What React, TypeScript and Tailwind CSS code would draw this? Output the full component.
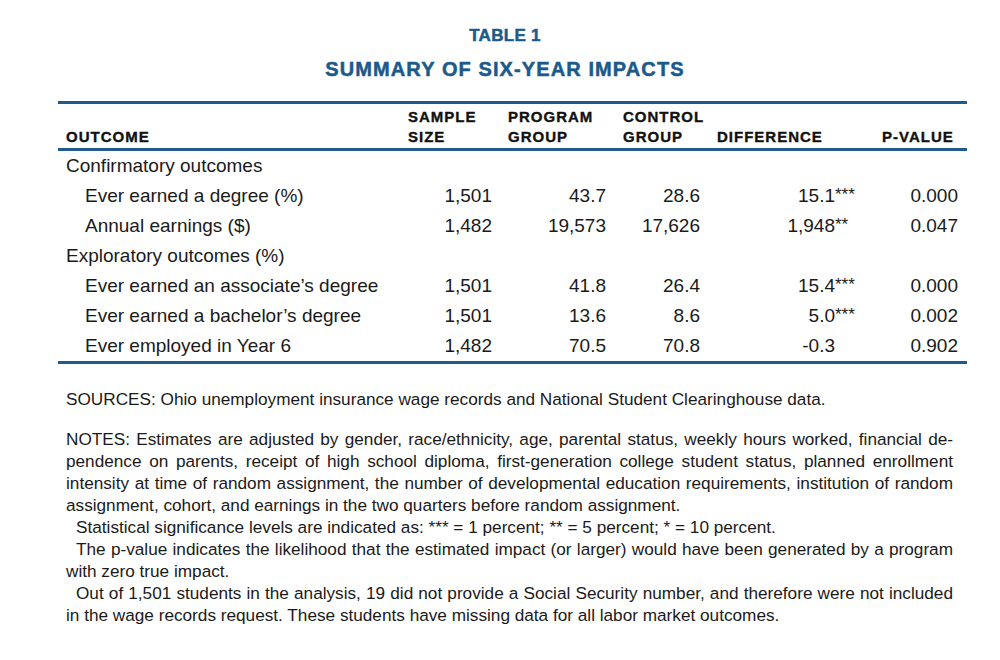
import type { ReactNode } from "react";

type Row = {
  label: string;
  group?: boolean;
  sample?: string;
  program?: string;
  control?: string;
  diff?: string;
  stars?: string;
  p?: string;
};

const ROWS: Row[] = [
  { label: "Confirmatory outcomes", group: true },
  { label: "Ever earned a degree (%)", sample: "1,501", program: "43.7", control: "28.6", diff: "15.1", stars: "***", p: "0.000" },
  { label: "Annual earnings ($)", sample: "1,482", program: "19,573", control: "17,626", diff: "1,948", stars: "**", p: "0.047" },
  { label: "Exploratory outcomes (%)", group: true },
  { label: "Ever earned an associate’s degree", sample: "1,501", program: "41.8", control: "26.4", diff: "15.4", stars: "***", p: "0.000" },
  { label: "Ever earned a bachelor’s degree", sample: "1,501", program: "13.6", control: "8.6", diff: "5.0", stars: "***", p: "0.002" },
  { label: "Ever employed in Year 6", sample: "1,482", program: "70.5", control: "70.8", diff: "-0.3", p: "0.902" },
];

const cols = "grid grid-cols-[342px_100px_112px_97px_164px_94px]";

export default function App() {
  return (
    <main className="min-h-screen w-[1000px] bg-white text-[#1a1a1a] font-['Liberation_Sans',Arial,sans-serif]">
      <div className="pt-[26px] pl-[10px] text-center font-bold text-[#1b5a8c] [-webkit-text-stroke:0.5px_#1b5a8c]">
        <div className="text-[17px] leading-[20px] tracking-[0.3px]">TABLE 1</div>
        <div className="mt-[11px] text-[20px] leading-[24px] tracking-[1.1px]">
          SUMMARY OF SIX-YEAR IMPACTS
        </div>
      </div>

      <div className="ml-[58px] mt-[20px] w-[909px]">
        {/* header */}
        <div
          className={`${cols} border-y-[3px] border-[#1f5b8b] pt-[3px] pb-[1px] text-[15px] font-bold leading-[20px] tracking-[1px] text-[#111] [-webkit-text-stroke:0.35px_#111]`}
        >
          <div className="flex items-end pl-[8px]">OUTCOME</div>
          <HeadCell className="pl-[8px]">SAMPLE<br />SIZE</HeadCell>
          <HeadCell className="pl-[8px]">PROGRAM<br />GROUP</HeadCell>
          <HeadCell className="pl-[11px]">CONTROL<br />GROUP</HeadCell>
          <HeadCell className="pl-[8px]">DIFFERENCE</HeadCell>
          <HeadCell className="pl-[9px]">P-VALUE</HeadCell>
        </div>

        {/* body */}
        <div className="border-b-[3px] border-[#1f5b8b] text-[19px]">
          {ROWS.map((r) => (
            <div key={r.label} className={`${cols} h-[30px] items-center`}>
              <div className={r.group ? "pl-[8px]" : "pl-[27px]"}>{r.label}</div>
              <div className="pr-[8px] text-right">{r.sample}</div>
              <div className="pr-[6px] text-right">{r.program}</div>
              <div className="pr-[9px] text-right">{r.control}</div>
              <div className="flex justify-end pr-[16px]">
                {r.diff && (
                  <>
                    <span>{r.diff}</span>
                    <span className="w-[22px] text-[17px]">{r.stars ?? ""}</span>
                  </>
                )}
              </div>
              <div className="pr-[9px] text-right">{r.p}</div>
            </div>
          ))}
        </div>
      </div>

      {/* notes */}
      <div className="ml-[66px] mt-[24px] w-[887px] text-[17.2px] leading-[22px]">
        <p>
          SOURCES: Ohio unemployment insurance wage records and National Student Clearinghouse data.
        </p>
        <div className="mt-[18px]">
          <Line>NOTES: Estimates are adjusted by gender, race/ethnicity, age, parental status, weekly hours worked, financial de-</Line>
          <Line>pendence on parents, receipt of high school diploma, first-generation college student status, planned enrollment</Line>
          <Line>intensity at time of random assignment, the number of developmental education requirements, institution of random</Line>
          <Line last>assignment, cohort, and earnings in the two quarters before random assignment.</Line>
          <Line last indent>
            Statistical significance levels are indicated as: *** = 1 percent; ** = 5 percent; * = 10 percent.
          </Line>
          <Line indent>
            The p-value indicates the likelihood that the estimated impact (or larger) would have been generated by a program
          </Line>
          <Line last>with zero true impact.</Line>
          <Line indent>
            Out of 1,501 students in the analysis, 19 did not provide a Social Security number, and therefore were not included
          </Line>
          <Line last>in the wage records request. These students have missing data for all labor market outcomes.</Line>
        </div>
      </div>
    </main>
  );
}

function HeadCell({ className, children }: { className: string; children: ReactNode }) {
  return <div className={`flex items-end ${className}`}><div>{children}</div></div>;
}

function Line({ children, last, indent }: { children: ReactNode; last?: boolean; indent?: boolean }) {
  return (
    <div
      className={`${indent ? "pl-[10px]" : ""} ${
        last ? "whitespace-nowrap text-left" : "text-justify [text-align-last:justify]"
      }`}
    >
      {children}
    </div>
  );
}
